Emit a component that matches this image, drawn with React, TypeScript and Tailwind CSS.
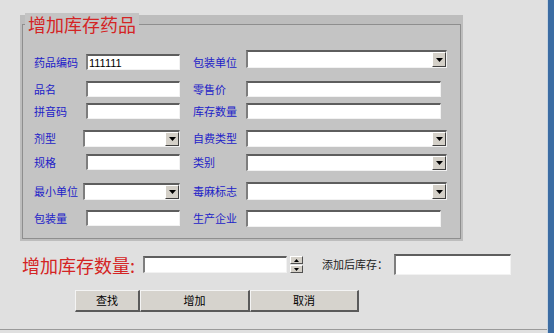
import React from "react";

const LABEL = "w-[52px] shrink-0 text-[11px] leading-none text-[#2222c8] whitespace-nowrap";
const LABEL_R = "w-[53px] shrink-0 text-[11px] leading-none text-[#2222c8] whitespace-nowrap";

function TextBox({ className, value }: { className: string; value?: string }) {
  return (
    <div
      className={
        "shrink-0 bg-white border-t-2 border-l-2 border-t-[#5e5e5e] border-l-[#7e7e7e] border-b border-r border-b-[#f2f2f2] border-r-[#f2f2f2] flex items-center pl-[1px] pt-[1px] text-[11px] leading-none text-black font-['Liberation_Sans',sans-serif] " +
        className
      }
    >
      {value}
    </div>
  );
}

function Combo({ className }: { className: string }) {
  return (
    <div
      className={
        "shrink-0 flex bg-white border-t-2 border-l-2 border-t-[#5e5e5e] border-l-[#7e7e7e] border-b border-r border-b-[#f2f2f2] border-r-[#f2f2f2] " +
        className
      }
    >
      <div className="flex-1" />
      <div className="w-[14px] h-full bg-[#d4d0c8] border-t border-l border-t-white border-l-white border-r border-b border-r-[#404040] border-b-[#404040] flex items-center justify-center">
        <svg width="7" height="4" viewBox="0 0 7 4">
          <path d="M0 0h7L3.5 4z" fill="#000" />
        </svg>
      </div>
    </div>
  );
}

function Row({ className, left, right }: { className: string; left: React.ReactNode; right: React.ReactNode }) {
  return (
    <div className={"flex items-center h-[16px] " + className}>
      <div className="flex items-center w-[159px]">{left}</div>
      {right}
    </div>
  );
}

function Btn({ className, label }: { className: string; label: string }) {
  return (
    <div
      className={
        "h-[22px] flex items-center justify-center bg-[#d6d3cd] border-t border-l border-t-[#f4f4f4] border-l-[#f4f4f4] border-r-2 border-b-2 border-r-[#5a5a5a] border-b-[#5a5a5a] text-[11px] text-black " +
        className
      }
    >
      {label}
    </div>
  );
}

export default function App() {
  return (
    <div className="w-[554px] h-[333px] flex bg-[#e0e0e0] font-['Noto_Sans_CJK_SC',sans-serif] overflow-hidden">
      <div className="w-[547px] h-[333px] flex flex-col">
        <div className="h-[330px] border-b border-b-[#9a9a9a] flex flex-col">
          {/* ── group box ── */}
          <div className="mt-[15px] ml-[20px] w-[443px] h-[226px] bg-[#bdbdbd] pt-[9px] px-[2px] pb-[2px]">
            <div className="h-full bg-[#c4c4c4] border border-[#8e8e8e] pl-[11px]">
              <div className="-mt-[12px] -ml-[9px] px-[3px] w-fit bg-[#c4c4c4] text-[18px] leading-[22px] text-[#d42424]">
                增加库存药品
              </div>

              <Row
                className="mt-[19px]"
                left={<><span className={LABEL}>药品编码</span><TextBox className="w-[94px] h-[16px]" value="111111" /></>}
                right={<><span className={LABEL_R}>包装单位</span><Combo className="w-[201px] h-[18px] mb-[6px]" /></>}
              />
              <Row
                className="mt-[11px]"
                left={<><span className={LABEL}>品名</span><TextBox className="w-[94px] h-[16px]" /></>}
                right={<><span className={LABEL_R}>零售价</span><TextBox className="w-[195px] h-[16px]" /></>}
              />
              <Row
                className="mt-[6px]"
                left={<><span className={LABEL}>拼音码</span><TextBox className="w-[94px] h-[16px]" /></>}
                right={<><span className={LABEL_R}>库存数量</span><TextBox className="w-[195px] h-[16px]" /></>}
              />
              <Row
                className="mt-[11px]"
                left={<><span className={LABEL}>剂型</span><Combo className="w-[97px] h-[17px] -ml-[3px]" /></>}
                right={<><span className={LABEL_R}>自费类型</span><Combo className="w-[201px] h-[17px]" /></>}
              />
              <Row
                className="mt-[8px]"
                left={<><span className={LABEL}>规格</span><TextBox className="w-[94px] h-[16px]" /></>}
                right={<><span className={LABEL_R}>类别</span><Combo className="w-[201px] h-[17px]" /></>}
              />
              <Row
                className="mt-[13px]"
                left={<><span className={LABEL}>最小单位</span><Combo className="w-[97px] h-[17px] -ml-[3px]" /></>}
                right={<><span className={LABEL_R}>毒麻标志</span><Combo className="w-[201px] h-[18px]" /></>}
              />
              <Row
                className="mt-[11px]"
                left={<><span className={LABEL}>包装量</span><TextBox className="w-[94px] h-[16px]" /></>}
                right={<><span className={LABEL_R}>生产企业</span><TextBox className="w-[195px] h-[17px]" /></>}
              />
            </div>
          </div>

          {/* ── quantity row ── */}
          <div className="mt-[13px] ml-[22px] h-[21px] flex items-center">
            <span className="w-[121px] shrink-0 text-[18px] leading-none text-[#d42424] whitespace-nowrap">
              增加库存数量:
            </span>
            <TextBox className="w-[144px] h-[17px]" />
            <div className="ml-[3px] w-[13px] h-[17px] flex flex-col">
              <div className="h-[8px] bg-[#d4d0c8] border-t border-l border-t-white border-l-white border-r border-b border-r-[#505050] border-b-[#505050] flex items-center justify-center">
                <svg width="5" height="3" viewBox="0 0 5 3"><path d="M2.5 0L5 3H0z" fill="#000" /></svg>
              </div>
              <div className="mt-[1px] h-[8px] bg-[#d4d0c8] border-t border-l border-t-white border-l-white border-r border-b border-r-[#505050] border-b-[#505050] flex items-center justify-center">
                <svg width="5" height="3" viewBox="0 0 5 3"><path d="M0 0h5L2.5 3z" fill="#000" /></svg>
              </div>
            </div>
            <span className="ml-[19px] w-[72px] shrink-0 text-[11px] leading-none text-[#222] whitespace-nowrap">添加后库存：</span>
            <TextBox className="w-[117px] h-[21px]" />
          </div>

          {/* ── buttons ── */}
          <div className="mt-[15px] ml-[75px] flex">
            <Btn className="w-[65px]" label="查找" />
            <Btn className="w-[110px]" label="增加" />
            <Btn className="w-[109px]" label="取消" />
          </div>
        </div>
      </div>
      <div className="w-[7px] h-[333px] bg-[#3b6ca3] border-l border-l-[#c8d4e0]" />
    </div>
  );
}
